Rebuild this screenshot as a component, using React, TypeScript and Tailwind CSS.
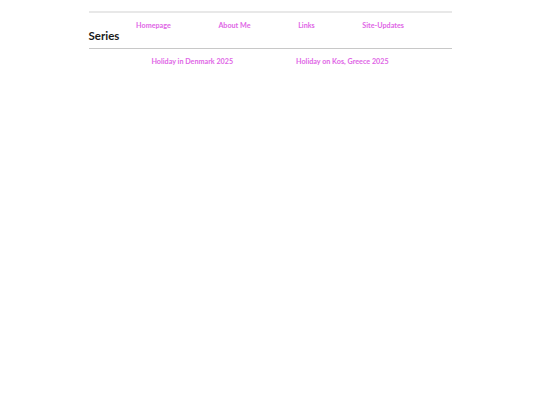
const nav = ['Homepage', 'About Me', 'Links', 'Site-Updates']
const series = ['Holiday in Denmark 2025', 'Holiday on Kos, Greece 2025']

export default function App() {
  return (
    <main className="min-h-screen bg-white font-['Lato','Noto_Sans',sans-serif]">
      <div className="mx-auto w-[363px] pt-[11px]">
        <header className="border-t-2 border-[#e8e8e8]">
          <nav className="flex justify-evenly pt-[8px] text-[7.2px] font-bold leading-[10px] text-[#e066e6]">
            {nav.map((item) => (
              <a key={item} href="#">
                {item}
              </a>
            ))}
          </nav>
          <h1 className="text-[11.5px] font-bold leading-[10px] text-[#1a1a1a]">Series</h1>
        </header>
        <section className="mt-[7px] border-t border-[#c8c8c8]">
          <div className="flex justify-evenly pt-[8px] text-[7.2px] font-bold leading-[10px] text-[#e066e6]">
            {series.map((item) => (
              <a key={item} href="#">
                {item}
              </a>
            ))}
          </div>
        </section>
      </div>
    </main>
  )
}
